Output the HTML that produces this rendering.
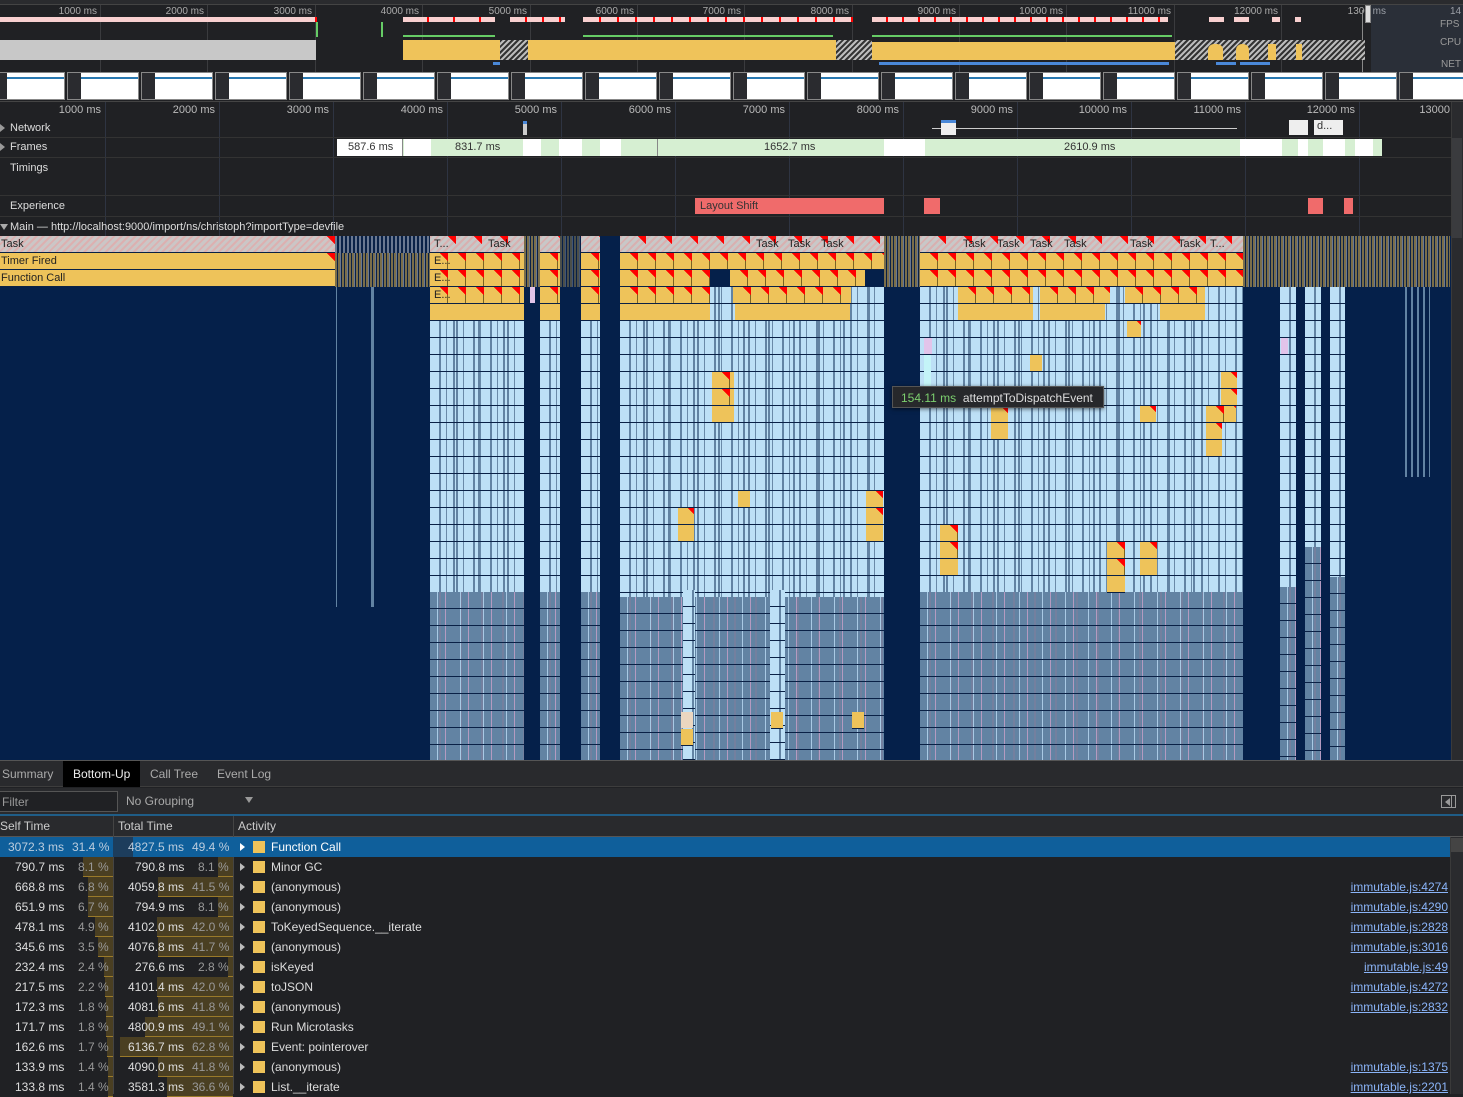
<!DOCTYPE html>
<html><head><meta charset="utf-8"><style>
*{margin:0;padding:0;box-sizing:border-box}
body{width:1463px;height:1094px;overflow:hidden;background:#202124;font-family:"Liberation Sans",sans-serif;font-size:12px;color:#ccc;position:relative}
.a{position:absolute}
.rl{position:absolute;font-size:10px;color:#aaa;text-align:right;width:60px}
.rl2{position:absolute;font-size:11px;color:#bbb;text-align:right;width:70px}
.gv{position:absolute;width:1px;background:#3a3b3e}
.th{position:absolute;top:72px;width:72px;height:28px;background:#fff;border:1px solid #888}
.th:before{content:"";position:absolute;left:0;top:0;width:13px;height:100%;background:#2a2b2f}
.th:after{content:"";position:absolute;left:13px;top:4px;right:0;height:2px;background:#2a79b0}
.lab{position:absolute;left:10px;font-size:11px;color:#ddd}
.tri{position:absolute;left:0;width:0;height:0;border-top:4px solid transparent;border-bottom:4px solid transparent;border-left:5px solid #999}
.blu{position:absolute;background:
 repeating-linear-gradient(180deg,transparent 0 16px,#0a2146 16px 17px),
 repeating-linear-gradient(90deg,transparent 0 9px,#6283a3 9px 11px,transparent 11px 16px,#6a8aa8 16px 17px),
 repeating-linear-gradient(90deg,transparent 0 23px,#6283a3 23px 25px),
 #bde0f6}
.gry{position:absolute;background:
 repeating-linear-gradient(180deg,transparent 0 16px,#0a2146 16px 17px),
 repeating-linear-gradient(90deg,transparent 0 7px,#a9c9e4 7px 8px,transparent 8px 15px,#b49ac0 15px 16px,transparent 16px 23px),
 repeating-linear-gradient(90deg,#6283a3 0 9px,#73809f 9px 11px,#6283a3 11px 21px),
 #6283a3}
.yel{position:absolute;height:17px;background:
 linear-gradient(225deg,#f00 0 6px,transparent 6px),
 linear-gradient(90deg,transparent 0 17px,#7a6424 17px 18px),
 #eec35a;background-size:18px 17px,18px 17px;border-bottom:1px solid #0a2146}
.tsk{position:absolute;height:17px;background:
 linear-gradient(225deg,#f00 0 6px,transparent 6px),
 repeating-linear-gradient(135deg,#d8b0b0 0 2px,#c8c8c8 2px 5px);background-size:26px 17px,auto;border-bottom:1px solid #0a2146}
.olv{position:absolute;background:repeating-linear-gradient(90deg,#7a6e4a 0 2px,#0a2146 2px 3px,#7a6e4a 3px 5px,#6a7890 5px 6px,#0a2146 6px 7px);}
.ft{position:absolute;font-size:11px;color:#222}
.row{position:absolute;left:0;width:1450px;height:20px;font-size:12px;color:#ddd}
.row span{position:absolute;top:3px}
.sq{position:absolute;left:253px;top:4px;width:12px;height:12px;background:#eec35a}
.ar{position:absolute;left:240px;top:6px;border-top:4px solid transparent;border-bottom:4px solid transparent;border-left:5px solid #bbb}
.lk{position:absolute;right:2px;top:3px;color:#8ab4f8;text-decoration:underline}
.bar{position:absolute;top:0;height:20px;background:#4a3f22;border-bottom:1px solid #9a7a2a}
</style></head><body>

<div class="a" style="left:0;top:0;width:1463px;height:4px;background:#2a2b2e"></div>
<div class="a" style="left:0;top:4px;width:1463px;height:1px;background:#444"></div>
<div class="gv" style="left:100px;top:5px;height:95px"></div><div class="gv" style="left:207px;top:5px;height:95px"></div><div class="gv" style="left:315px;top:5px;height:95px"></div><div class="gv" style="left:422px;top:5px;height:95px"></div><div class="gv" style="left:530px;top:5px;height:95px"></div><div class="gv" style="left:637px;top:5px;height:95px"></div><div class="gv" style="left:744px;top:5px;height:95px"></div><div class="gv" style="left:852px;top:5px;height:95px"></div><div class="gv" style="left:959px;top:5px;height:95px"></div><div class="gv" style="left:1066px;top:5px;height:95px"></div><div class="gv" style="left:1174px;top:5px;height:95px"></div><div class="gv" style="left:1281px;top:5px;height:95px"></div>
<div class="rl" style="left:37px;top:6px">1000 ms</div><div class="rl" style="left:144px;top:6px">2000 ms</div><div class="rl" style="left:252px;top:6px">3000 ms</div><div class="rl" style="left:359px;top:6px">4000 ms</div><div class="rl" style="left:467px;top:6px">5000 ms</div><div class="rl" style="left:574px;top:6px">6000 ms</div><div class="rl" style="left:681px;top:6px">7000 ms</div><div class="rl" style="left:789px;top:6px">8000 ms</div><div class="rl" style="left:896px;top:6px">9000 ms</div><div class="rl" style="left:1003px;top:6px">10000 ms</div><div class="rl" style="left:1111px;top:6px">11000 ms</div><div class="rl" style="left:1218px;top:6px">12000 ms</div><div class="rl" style="left:1326px;top:6px">1300 ms</div><div class="a" style="left:1450px;top:6px;font-size:10px;color:#aaa">14</div>
<div class="a" style="left:0;top:17px;width:315px;height:5px;background:#f8d0d0"></div>
<div class="a" style="left:315px;top:17px;width:2px;height:5px;background:#f00"></div>
<div class="a" style="left:403px;top:17px;width:92px;height:5px;background:repeating-linear-gradient(90deg,#f8d0d0 0 24px,#f00 24px 26px)"></div>
<div class="a" style="left:510px;top:17px;width:55px;height:5px;background:repeating-linear-gradient(90deg,#f8d0d0 0 15px,#f00 15px 17px)"></div>
<div class="a" style="left:583px;top:17px;width:270px;height:5px;background:repeating-linear-gradient(90deg,#f8d0d0 0 16px,#f00 16px 18px)"></div>
<div class="a" style="left:872px;top:17px;width:296px;height:5px;background:repeating-linear-gradient(90deg,#f8d0d0 0 14px,#f00 14px 16px)"></div>
<div class="a" style="left:1209px;top:17px;width:15px;height:5px;background:#f8d0d0"></div><div class="a" style="left:1234px;top:17px;width:15px;height:5px;background:#f8d0d0"></div><div class="a" style="left:1272px;top:17px;width:8px;height:5px;background:#f8d0d0"></div><div class="a" style="left:1295px;top:17px;width:6px;height:5px;background:#f8d0d0"></div>
<div class="a" style="left:316px;top:22px;width:2px;height:15px;background:#6c6"></div><div class="a" style="left:381px;top:22px;width:2px;height:15px;background:#6c6"></div>
<div class="a" style="left:403px;top:35px;width:92px;height:2px;background:#6c6"></div><div class="a" style="left:583px;top:35px;width:250px;height:2px;background:#6c6"></div><div class="a" style="left:872px;top:35px;width:300px;height:2px;background:#6c6"></div>
<div class="a" style="left:1362px;top:10px;width:1px;height:90px;background:#888"></div>
<div class="a" style="left:1365px;top:5px;width:6px;height:18px;background:#ddd;border:1px solid #888"></div>
<div class="a" style="left:1371px;top:5px;width:92px;height:95px;background:rgba(90,110,150,.18)"></div>
<div class="a" style="left:1440px;top:19px;font-size:10px;color:#999">FPS</div><div class="a" style="left:1440px;top:37px;font-size:10px;color:#999">CPU</div><div class="a" style="left:1441px;top:59px;font-size:10px;color:#999">NET</div>
<div class="a" style="left:0;top:40px;width:316px;height:20px;background:#c8c8c8"></div>
<div class="a" style="left:403px;top:40px;width:433px;height:20px;background:#efc35a"></div>
<div class="a" style="left:500px;top:40px;width:28px;height:20px;background:repeating-linear-gradient(135deg,#333 0 2px,#bbb 2px 4px)"></div>
<div class="a" style="left:836px;top:40px;width:36px;height:20px;background:repeating-linear-gradient(135deg,#333 0 2px,#bbb 2px 4px)"></div>
<div class="a" style="left:872px;top:42px;width:303px;height:18px;background:#efc35a"></div>
<div class="a" style="left:1175px;top:40px;width:190px;height:20px;background:repeating-linear-gradient(135deg,#333 0 2px,#bbb 2px 4px)"></div>
<div class="a" style="left:1208px;top:44px;width:15px;height:16px;background:#efc35a;border-radius:6px 6px 0 0"></div><div class="a" style="left:1236px;top:44px;width:13px;height:16px;background:#efc35a;border-radius:6px 6px 0 0"></div><div class="a" style="left:1268px;top:44px;width:8px;height:16px;background:#efc35a"></div><div class="a" style="left:1296px;top:44px;width:6px;height:16px;background:#efc35a"></div>
<div class="a" style="left:879px;top:62px;width:290px;height:3px;background:#4a88d8"></div><div class="a" style="left:1216px;top:62px;width:20px;height:3px;background:#4a88d8"></div><div class="a" style="left:1240px;top:62px;width:30px;height:3px;background:#4a88d8"></div><div class="a" style="left:493px;top:62px;width:7px;height:3px;background:#4a88d8"></div>
<div class="th" style="left:-7px"></div><div class="th" style="left:67px"></div><div class="th" style="left:141px"></div><div class="th" style="left:215px"></div><div class="th" style="left:289px"></div><div class="th" style="left:363px"></div><div class="th" style="left:437px"></div><div class="th" style="left:511px"></div><div class="th" style="left:585px"></div><div class="th" style="left:659px"></div><div class="th" style="left:733px"></div><div class="th" style="left:807px"></div><div class="th" style="left:881px"></div><div class="th" style="left:955px"></div><div class="th" style="left:1029px"></div><div class="th" style="left:1103px"></div><div class="th" style="left:1177px"></div><div class="th" style="left:1251px"></div><div class="th" style="left:1325px"></div><div class="th" style="left:1399px"></div>
<div class="a" style="left:0;top:101px;width:1463px;height:1px;background:#444"></div>

<div class="gv" style="left:105px;top:102px;height:658px;background:#2e3442"></div><div class="gv" style="left:219px;top:102px;height:658px;background:#2e3442"></div><div class="gv" style="left:333px;top:102px;height:658px;background:#2e3442"></div><div class="gv" style="left:447px;top:102px;height:658px;background:#2e3442"></div><div class="gv" style="left:561px;top:102px;height:658px;background:#2e3442"></div><div class="gv" style="left:675px;top:102px;height:658px;background:#2e3442"></div><div class="gv" style="left:789px;top:102px;height:658px;background:#2e3442"></div><div class="gv" style="left:903px;top:102px;height:658px;background:#2e3442"></div><div class="gv" style="left:1017px;top:102px;height:658px;background:#2e3442"></div><div class="gv" style="left:1131px;top:102px;height:658px;background:#2e3442"></div><div class="gv" style="left:1245px;top:102px;height:658px;background:#2e3442"></div><div class="gv" style="left:1359px;top:102px;height:658px;background:#2e3442"></div>
<div class="rl2" style="left:31px;top:104px">1000 ms</div><div class="rl2" style="left:145px;top:104px">2000 ms</div><div class="rl2" style="left:259px;top:104px">3000 ms</div><div class="rl2" style="left:373px;top:104px">4000 ms</div><div class="rl2" style="left:487px;top:104px">5000 ms</div><div class="rl2" style="left:601px;top:104px">6000 ms</div><div class="rl2" style="left:715px;top:104px">7000 ms</div><div class="rl2" style="left:829px;top:104px">8000 ms</div><div class="rl2" style="left:943px;top:104px">9000 ms</div><div class="rl2" style="left:1057px;top:104px">10000 ms</div><div class="rl2" style="left:1171px;top:104px">11000 ms</div><div class="rl2" style="left:1285px;top:104px">12000 ms</div><div class="rl2" style="left:1380px;top:104px">13000</div>
<div class="a" style="left:1451px;top:102px;width:12px;height:658px;background:#2a2b2e;border-left:1px solid #3a3a3a"></div>
<div class="a" style="left:1452px;top:138px;width:10px;height:100px;background:#3a3b3e"></div>

<div class="tri" style="top:124px"></div><div class="lab" style="top:122px">Network</div>
<div class="a" style="left:523px;top:121px;width:4px;height:14px;background:#ccc;border-top:3px solid #4a88d8"></div>
<div class="a" style="left:932px;top:128px;width:305px;height:1px;background:#ccc"></div>
<div class="a" style="left:941px;top:120px;width:15px;height:15px;background:#eee;border-top:3px solid #4a88d8"></div>
<div class="a" style="left:1289px;top:120px;width:19px;height:15px;background:#eee"></div>
<div class="a" style="left:1314px;top:120px;width:29px;height:15px;background:#eee;font-size:11px;color:#333;padding-left:3px">d...</div>
<div class="a" style="left:0;top:137px;width:1451px;height:1px;background:#333"></div>
<div class="tri" style="top:143px"></div><div class="lab" style="top:141px">Frames</div>
<div class="a" style="left:337px;top:139px;width:1045px;height:17px;background:#d6efd2"></div>
<div class="a" style="left:337px;top:139px;width:66px;height:17px;background:#fff;border-right:1px solid #888;font-size:11px;color:#333;padding:2px 0 0 11px">587.6 ms</div>
<div class="a" style="left:404px;top:139px;width:27px;height:17px;background:#fff"></div>
<div class="a" style="left:455px;top:141px;font-size:11px;color:#333">831.7 ms</div>
<div class="a" style="left:523px;top:139px;width:18px;height:17px;background:#fff"></div><div class="a" style="left:559px;top:139px;width:23px;height:17px;background:#fff"></div><div class="a" style="left:600px;top:139px;width:21px;height:17px;background:#fff"></div>
<div class="a" style="left:657px;top:139px;width:1px;height:17px;background:#888"></div>
<div class="a" style="left:764px;top:141px;font-size:11px;color:#333">1652.7 ms</div>
<div class="a" style="left:884px;top:139px;width:41px;height:17px;background:#fff"></div>
<div class="a" style="left:1064px;top:141px;font-size:11px;color:#333">2610.9 ms</div>
<div class="a" style="left:1240px;top:139px;width:42px;height:17px;background:#fff"></div><div class="a" style="left:1298px;top:139px;width:10px;height:17px;background:#fff"></div><div class="a" style="left:1323px;top:139px;width:22px;height:17px;background:#fff"></div><div class="a" style="left:1355px;top:139px;width:18px;height:17px;background:#fff"></div>
<div class="a" style="left:0;top:157px;width:1451px;height:1px;background:#333"></div>
<div class="lab" style="top:162px">Timings</div>
<div class="a" style="left:0;top:195px;width:1451px;height:1px;background:#333"></div>
<div class="lab" style="top:200px">Experience</div>
<div class="a" style="left:695px;top:198px;width:189px;height:16px;background:#f06b6b;font-size:11px;color:#333;padding:2px 0 0 5px">Layout Shift</div>
<div class="a" style="left:924px;top:198px;width:16px;height:16px;background:#f06b6b"></div><div class="a" style="left:1308px;top:198px;width:15px;height:16px;background:#f06b6b"></div><div class="a" style="left:1344px;top:198px;width:9px;height:16px;background:#f06b6b"></div>
<div class="a" style="left:0;top:216px;width:1451px;height:1px;background:#333"></div>
<div class="a" style="left:0;top:224px;border-left:4px solid transparent;border-right:4px solid transparent;border-top:6px solid #aaa"></div>
<div class="lab" style="top:221px">Main — http://localhost:9000/import/ns/christoph?importType=devfile</div>

<div class="a" style="left:0;top:236px;width:1451px;height:524px;background:#05204a"></div>
<div class="a" style="left:0;top:236px;width:335px;height:17px;border-bottom:1px solid #0a2146;background:linear-gradient(225deg,#f00 0 6px,transparent 6px) right top/10px 10px no-repeat,repeating-linear-gradient(135deg,#dcb0b0 0 2px,#cbc6c6 2px 5px)"></div>
<div class="a" style="left:0;top:253px;width:335px;height:17px;border-bottom:1px solid #0a2146;background:linear-gradient(225deg,#f00 0 6px,transparent 6px) right top/10px 10px no-repeat,#eec35a"></div>
<div class="a" style="left:0;top:270px;width:335px;height:17px;border-bottom:1px solid #0a2146;background:#eec35a"></div>
<div class="olv" style="left:335px;top:236px;width:95px;height:51px"></div>
<div class="a" style="left:335px;top:236px;width:95px;height:17px;background:repeating-linear-gradient(90deg,#6a7890 0 2px,#0a2146 2px 4px)"></div>
<div class="a" style="left:336px;top:287px;width:1px;height:320px;background:#6283a3"></div><div class="a" style="left:371px;top:287px;width:3px;height:320px;background:#6283a3"></div>
<div class="ft" style="left:1px;top:238px">Task</div><div class="ft" style="left:1px;top:255px">Timer Fired</div><div class="ft" style="left:1px;top:272px">Function Call</div>

<div class="blu" style="left:430px;top:287px;width:94px;height:305px"></div>
<div class="blu" style="left:540px;top:287px;width:20px;height:305px"></div>
<div class="blu" style="left:581px;top:287px;width:19px;height:305px"></div>
<div class="blu" style="left:620px;top:287px;width:264px;height:310px"></div>
<div class="blu" style="left:920px;top:287px;width:323px;height:305px"></div>
<div class="blu" style="left:1280px;top:287px;width:16px;height:300px"></div>
<div class="blu" style="left:1305px;top:287px;width:16px;height:260px"></div>
<div class="blu" style="left:1330px;top:287px;width:15px;height:290px"></div>
<div class="a" style="left:1405px;top:287px;width:25px;height:190px;background:repeating-linear-gradient(90deg,#6283a3 0 2px,#05204a 2px 6px)"></div>
<div class="gry" style="left:430px;top:592px;width:94px;height:168px"></div>
<div class="gry" style="left:540px;top:592px;width:20px;height:168px"></div>
<div class="gry" style="left:581px;top:592px;width:19px;height:168px"></div>
<div class="gry" style="left:620px;top:597px;width:264px;height:163px"></div>
<div class="gry" style="left:920px;top:592px;width:323px;height:168px"></div>
<div class="gry" style="left:1280px;top:587px;width:16px;height:173px"></div>
<div class="gry" style="left:1305px;top:547px;width:16px;height:213px"></div>
<div class="gry" style="left:1330px;top:577px;width:15px;height:183px"></div>
<div class="blu" style="left:770px;top:590px;width:15px;height:170px"></div>
<div class="blu" style="left:683px;top:590px;width:12px;height:170px"></div>

<div class="tsk" style="left:430px;top:236px;width:94px"></div><div class="tsk" style="left:540px;top:236px;width:20px"></div><div class="tsk" style="left:581px;top:236px;width:19px"></div><div class="tsk" style="left:620px;top:236px;width:264px"></div><div class="tsk" style="left:920px;top:236px;width:323px"></div>
<div class="yel" style="left:430px;top:253px;width:94px"></div><div class="yel" style="left:540px;top:253px;width:20px"></div><div class="yel" style="left:581px;top:253px;width:19px"></div><div class="yel" style="left:620px;top:253px;width:264px"></div><div class="yel" style="left:920px;top:253px;width:323px"></div>
<div class="yel" style="left:430px;top:270px;width:94px"></div><div class="yel" style="left:540px;top:270px;width:20px"></div><div class="yel" style="left:581px;top:270px;width:19px"></div><div class="yel" style="left:620px;top:270px;width:90px"></div><div class="yel" style="left:730px;top:270px;width:135px"></div><div class="yel" style="left:920px;top:270px;width:323px"></div>
<div class="yel" style="left:430px;top:287px;width:94px"></div><div class="yel" style="left:540px;top:287px;width:20px"></div><div class="yel" style="left:581px;top:287px;width:19px"></div><div class="yel" style="left:620px;top:287px;width:90px"></div><div class="yel" style="left:733px;top:287px;width:118px"></div><div class="yel" style="left:958px;top:287px;width:75px"></div><div class="yel" style="left:1040px;top:287px;width:70px"></div><div class="yel" style="left:1125px;top:287px;width:80px"></div>
<div class="yel" style="left:430px;top:304px;width:94px;background:#eec35a"></div><div class="yel" style="left:540px;top:304px;width:20px;background:#eec35a"></div><div class="yel" style="left:581px;top:304px;width:19px;background:#eec35a"></div><div class="yel" style="left:620px;top:304px;width:90px;background:#eec35a"></div><div class="yel" style="left:735px;top:304px;width:115px;background:#eec35a"></div><div class="yel" style="left:958px;top:304px;width:75px;background:#eec35a"></div><div class="yel" style="left:1040px;top:304px;width:65px;background:#eec35a"></div><div class="yel" style="left:1160px;top:304px;width:45px;background:#eec35a"></div>
<div class="ft" style="left:434px;top:238px">T...</div><div class="ft" style="left:488px;top:238px">Task</div><div class="ft" style="left:756px;top:238px">Task</div><div class="ft" style="left:788px;top:238px">Task</div><div class="ft" style="left:821px;top:238px">Task</div><div class="ft" style="left:963px;top:238px">Task</div><div class="ft" style="left:997px;top:238px">Task</div><div class="ft" style="left:1030px;top:238px">Task</div><div class="ft" style="left:1064px;top:238px">Task</div><div class="ft" style="left:1130px;top:238px">Task</div><div class="ft" style="left:1178px;top:238px">Task</div><div class="ft" style="left:1210px;top:238px">T...</div>
<div class="ft" style="left:434px;top:255px">E...</div><div class="ft" style="left:434px;top:272px">E...</div><div class="ft" style="left:434px;top:289px">E...</div>
<div class="olv" style="left:884px;top:236px;width:36px;height:51px"></div>
<div class="olv" style="left:1243px;top:236px;width:207px;height:51px"></div>
<div class="olv" style="left:524px;top:236px;width:16px;height:51px"></div><div class="olv" style="left:560px;top:236px;width:21px;height:51px;opacity:.6"></div>
<div class="yel" style="left:1127px;top:321px;width:14px"></div>
<div class="yel" style="left:1030px;top:355px;width:12px;background:#eec35a"></div>
<div class="yel" style="left:712px;top:372px;width:22px"></div><div class="yel" style="left:712px;top:389px;width:22px"></div><div class="yel" style="left:712px;top:406px;width:22px;background:#eec35a"></div>
<div class="yel" style="left:1221px;top:372px;width:16px"></div><div class="yel" style="left:1221px;top:389px;width:16px"></div><div class="yel" style="left:1206px;top:406px;width:30px"></div><div class="yel" style="left:1206px;top:423px;width:16px"></div><div class="yel" style="left:1206px;top:440px;width:16px;background:#eec35a"></div>
<div class="yel" style="left:991px;top:406px;width:17px"></div><div class="yel" style="left:991px;top:423px;width:17px;background:#eec35a"></div>
<div class="yel" style="left:1140px;top:406px;width:16px"></div>
<div class="yel" style="left:738px;top:491px;width:12px;background:#eec35a"></div>
<div class="yel" style="left:866px;top:491px;width:17px"></div><div class="yel" style="left:866px;top:508px;width:17px"></div><div class="yel" style="left:866px;top:525px;width:17px;background:#eec35a"></div>
<div class="yel" style="left:678px;top:508px;width:16px"></div><div class="yel" style="left:678px;top:525px;width:16px;background:#eec35a"></div>
<div class="yel" style="left:940px;top:525px;width:18px"></div><div class="yel" style="left:940px;top:542px;width:18px"></div><div class="yel" style="left:940px;top:559px;width:18px;background:#eec35a"></div>
<div class="yel" style="left:1107px;top:542px;width:18px"></div><div class="yel" style="left:1107px;top:559px;width:18px"></div><div class="yel" style="left:1107px;top:576px;width:18px;background:#eec35a"></div>
<div class="yel" style="left:1140px;top:542px;width:17px"></div><div class="yel" style="left:1140px;top:559px;width:17px;background:#eec35a"></div>
<div class="yel" style="left:771px;top:712px;width:12px;background:#eec35a"></div><div class="yel" style="left:852px;top:712px;width:12px;background:#eec35a"></div>
<div class="a" style="left:681px;top:712px;width:12px;height:16px;background:#ebd6c0"></div><div class="yel" style="left:681px;top:729px;width:12px;background:#eec35a"></div>
<div class="a" style="left:924px;top:338px;width:8px;height:16px;background:#e2c4ea"></div><div class="a" style="left:1281px;top:338px;width:7px;height:16px;background:#e2c4ea"></div>
<div class="a" style="left:924px;top:355px;width:7px;height:50px;background:#c4f4f8"></div>
<div class="a" style="left:530px;top:287px;width:5px;height:16px;background:#e2c4ea"></div>

<div class="a" style="left:892px;top:386px;width:212px;height:22px;background:#27282b;border:1px solid #555;box-shadow:0 1px 4px rgba(0,0,0,.6);font-size:12px;padding:4px 0 0 8px;color:#ddd"><span style="color:#7ccf6e">154.11 ms</span>&nbsp; attemptToDispatchEvent</div>

<div class="a" style="left:0;top:760px;width:1463px;height:1px;background:#555"></div>
<div class="a" style="left:0;top:761px;width:1463px;height:26px;background:#292a2d;border-bottom:1px solid #3d3d3d"></div>
<div class="a" style="left:2px;top:767px;color:#aaa">Summary</div>
<div class="a" style="left:63px;top:761px;width:77px;height:26px;background:#000;color:#eee;padding:6px 0 0 10px">Bottom-Up</div>
<div class="a" style="left:150px;top:767px;color:#aaa">Call Tree</div>
<div class="a" style="left:217px;top:767px;color:#aaa">Event Log</div>
<div class="a" style="left:0;top:788px;width:1463px;height:26px;background:#292a2d"></div>
<div class="a" style="left:-2px;top:791px;width:120px;height:21px;border:1px solid #555;background:#202124;color:#999;padding:3px 0 0 3px">Filter</div>
<div class="a" style="left:126px;top:794px;color:#aaa">No Grouping</div>
<div class="a" style="left:245px;top:797px;border-left:4px solid transparent;border-right:4px solid transparent;border-top:6px solid #999"></div>
<div class="a" style="left:1441px;top:795px;width:15px;height:13px;border:1px solid #999"></div><div class="a" style="left:1445px;top:798px;border-top:4px solid transparent;border-bottom:4px solid transparent;border-right:5px solid #999"></div><div class="a" style="left:1451px;top:796px;width:1px;height:11px;background:#999"></div>
<div class="a" style="left:0;top:814px;width:1463px;height:2px;background:#1f5d87"></div>
<div class="a" style="left:0;top:816px;width:1463px;height:21px;background:#292a2d;border-bottom:1px solid #555"></div>
<div class="a" style="left:0;top:819px;color:#ccc">Self Time</div><div class="a" style="left:118px;top:819px;color:#ccc">Total Time</div><div class="a" style="left:238px;top:819px;color:#ccc">Activity</div>
<div class="a" style="left:113px;top:816px;width:1px;height:278px;background:#444"></div><div class="a" style="left:233px;top:816px;width:1px;height:278px;background:#444"></div>
<div class="a" style="left:1450px;top:837px;width:13px;height:257px;background:#2a2b2e;border-left:1px solid #3a3a3a"></div>
<div class="a" style="left:1451px;top:838px;width:12px;height:14px;background:#444"></div>

<div class="row" style="top:837px;background:#0f5f9b"><div class="bar" style="left:113px;width:20px;background:#1d3d5c;border:none"></div><span style="left:8px;color:#bcd">3072.3 ms</span><span style="left:72px;color:#bcd">31.4 %</span><span style="left:128px;color:#bcd">4827.5 ms</span><span style="left:192px;color:#bcd">49.4 %</span><i class="ar" style="border-left-color:#fff"></i><i class="sq"></i><span style="left:271px;color:#fff">Function Call</span></div>
<div class="row" style="top:857px"><div class="bar" style="left:83px;width:30px"></div><div class="bar" style="left:218px;width:15px"></div><span style="left:15px">790.7 ms</span><span style="left:78px;color:#999">8.1 %</span><span style="left:135px">790.8 ms</span><span style="left:198px;color:#999">8.1 %</span><i class="ar"></i><i class="sq"></i><span style="left:271px">Minor GC</span></div>
<div class="row" style="top:877px"><div class="bar" style="left:88px;width:25px"></div><div class="bar" style="left:158px;width:75px"></div><span style="left:15px">668.8 ms</span><span style="left:78px;color:#999">6.8 %</span><span style="left:128px">4059.8 ms</span><span style="left:192px;color:#999">41.5 %</span><i class="ar"></i><i class="sq"></i><span style="left:271px">(anonymous)</span><a class="lk">immutable.js:4274</a></div>
<div class="row" style="top:897px"><div class="bar" style="left:88px;width:25px"></div><div class="bar" style="left:218px;width:15px"></div><span style="left:15px">651.9 ms</span><span style="left:78px;color:#999">6.7 %</span><span style="left:135px">794.9 ms</span><span style="left:198px;color:#999">8.1 %</span><i class="ar"></i><i class="sq"></i><span style="left:271px">(anonymous)</span><a class="lk">immutable.js:4290</a></div>
<div class="row" style="top:917px"><div class="bar" style="left:95px;width:18px"></div><div class="bar" style="left:157px;width:76px"></div><span style="left:15px">478.1 ms</span><span style="left:78px;color:#999">4.9 %</span><span style="left:128px">4102.0 ms</span><span style="left:192px;color:#999">42.0 %</span><i class="ar"></i><i class="sq"></i><span style="left:271px">ToKeyedSequence.__iterate</span><a class="lk">immutable.js:2828</a></div>
<div class="row" style="top:937px"><div class="bar" style="left:98px;width:15px"></div><div class="bar" style="left:158px;width:75px"></div><span style="left:15px">345.6 ms</span><span style="left:78px;color:#999">3.5 %</span><span style="left:128px">4076.8 ms</span><span style="left:192px;color:#999">41.7 %</span><i class="ar"></i><i class="sq"></i><span style="left:271px">(anonymous)</span><a class="lk">immutable.js:3016</a></div>
<div class="row" style="top:957px"><div class="bar" style="left:104px;width:9px"></div><div class="bar" style="left:228px;width:5px"></div><span style="left:15px">232.4 ms</span><span style="left:78px;color:#999">2.4 %</span><span style="left:135px">276.6 ms</span><span style="left:198px;color:#999">2.8 %</span><i class="ar"></i><i class="sq"></i><span style="left:271px">isKeyed</span><a class="lk">immutable.js:49</a></div>
<div class="row" style="top:977px"><div class="bar" style="left:105px;width:8px"></div><div class="bar" style="left:157px;width:76px"></div><span style="left:15px">217.5 ms</span><span style="left:78px;color:#999">2.2 %</span><span style="left:128px">4101.4 ms</span><span style="left:192px;color:#999">42.0 %</span><i class="ar"></i><i class="sq"></i><span style="left:271px">toJSON</span><a class="lk">immutable.js:4272</a></div>
<div class="row" style="top:997px"><div class="bar" style="left:106px;width:7px"></div><div class="bar" style="left:158px;width:75px"></div><span style="left:15px">172.3 ms</span><span style="left:78px;color:#999">1.8 %</span><span style="left:128px">4081.6 ms</span><span style="left:192px;color:#999">41.8 %</span><i class="ar"></i><i class="sq"></i><span style="left:271px">(anonymous)</span><a class="lk">immutable.js:2832</a></div>
<div class="row" style="top:1017px"><div class="bar" style="left:106px;width:7px"></div><div class="bar" style="left:145px;width:88px"></div><span style="left:15px">171.7 ms</span><span style="left:78px;color:#999">1.8 %</span><span style="left:128px">4800.9 ms</span><span style="left:192px;color:#999">49.1 %</span><i class="ar"></i><i class="sq"></i><span style="left:271px">Run Microtasks</span></div>
<div class="row" style="top:1037px"><div class="bar" style="left:107px;width:6px"></div><div class="bar" style="left:120px;width:113px"></div><span style="left:15px">162.6 ms</span><span style="left:78px;color:#999">1.7 %</span><span style="left:128px">6136.7 ms</span><span style="left:192px;color:#999">62.8 %</span><i class="ar"></i><i class="sq"></i><span style="left:271px">Event: pointerover</span></div>
<div class="row" style="top:1057px"><div class="bar" style="left:108px;width:5px"></div><div class="bar" style="left:158px;width:75px"></div><span style="left:15px">133.9 ms</span><span style="left:78px;color:#999">1.4 %</span><span style="left:128px">4090.0 ms</span><span style="left:192px;color:#999">41.8 %</span><i class="ar"></i><i class="sq"></i><span style="left:271px">(anonymous)</span><a class="lk">immutable.js:1375</a></div>
<div class="row" style="top:1077px"><div class="bar" style="left:108px;width:5px"></div><div class="bar" style="left:167px;width:66px"></div><span style="left:15px">133.8 ms</span><span style="left:78px;color:#999">1.4 %</span><span style="left:128px">3581.3 ms</span><span style="left:192px;color:#999">36.6 %</span><i class="ar"></i><i class="sq"></i><span style="left:271px">List.__iterate</span><a class="lk">immutable.js:2201</a></div>
</body></html>
